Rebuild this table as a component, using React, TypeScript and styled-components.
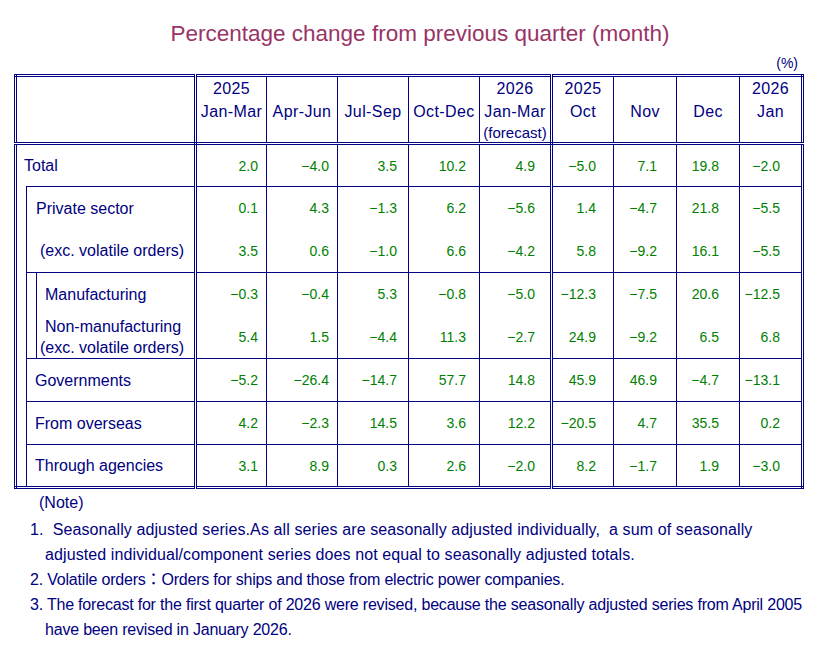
import React from "react";
import styled, { createGlobalStyle } from "styled-components";

const NAVY = "#000080";
const GREEN = "#008000";

const GlobalStyle = createGlobalStyle`
  html, body {
    margin: 0;
    padding: 0;
    background: #ffffff;
  }
  body {
    font-family: "Liberation Sans", Arial, "Noto Sans CJK JP", sans-serif;
    color: ${NAVY};
  }
`;

const Page = styled.div`
  width: 818px;
  height: 658px;
  overflow: hidden;
`;

const Title = styled.h1`
  margin: 0;
  padding: 20px 0 0 22px;
  font-size: 22.5px;
  line-height: 28px;
  font-weight: normal;
  text-align: center;
  color: #993366;
`;

const Unit = styled.div`
  margin-top: 6px;
  padding-right: 20px;
  text-align: right;
  font-size: 14px;
  line-height: 18px;
`;

const Table = styled.table`
  border-collapse: collapse;
  table-layout: fixed;
  width: 790px;
  margin: 2px auto 0;
  border: 3px double ${NAVY};
`;

const Col = styled.col<{ $w: number }>`
  width: ${(p) => p.$w}px;
`;

const Row = styled.tr<{ $h: number }>`
  height: ${(p) => p.$h}px;
`;

const HeadLabel = styled.th`
  padding: 0;
  border-right: 3px double ${NAVY};
  border-bottom: 3px double ${NAVY};
`;

const HeadCell = styled.th<{ $double?: boolean }>`
  padding: 0;
  vertical-align: middle;
  text-align: center;
  font-weight: normal;
  color: ${NAVY};
  border-bottom: 3px double ${NAVY};
  border-right: ${(p) => (p.$double ? `3px double ${NAVY}` : `1px solid ${NAVY}`)};
`;

const HeadLine = styled.div`
  white-space: nowrap;
  line-height: 23px;
  font-size: 16px;
  letter-spacing: 0.4px;

  &:last-child {
    line-height: 19px;
    font-size: 15px;
    letter-spacing: 0;
  }
`;

const Spacer = styled.td<{ $edge?: boolean }>`
  padding: 0;
  border-left: ${(p) => (p.$edge ? `1px solid ${NAVY}` : "none")};
  border-bottom: ${(p) => (p.$edge ? `1px solid ${NAVY}` : "none")};
`;

const LabelCell = styled.td<{ $pad: number; $top?: boolean; $left?: boolean; $open?: boolean }>`
  padding: 0 0 0 ${(p) => p.$pad}px;
  font-size: 16px;
  line-height: 21px;
  white-space: nowrap;
  color: ${NAVY};
  vertical-align: middle;
  border-right: 3px double ${NAVY};
  border-top: ${(p) => (p.$top ? `1px solid ${NAVY}` : "none")};
  border-left: ${(p) => (p.$left ? `1px solid ${NAVY}` : "none")};
  border-bottom: ${(p) => (p.$open ? "none" : `1px solid ${NAVY}`)};
`;

const WrapLabel = styled(LabelCell)`
  text-indent: 5px;
  white-space: normal;
`;

const NumCell = styled.td<{ $pad: number; $double?: boolean; $open?: boolean }>`
  padding: 0 ${(p) => p.$pad}px 0 0;
  text-align: right;
  vertical-align: middle;
  font-size: 14px;
  color: ${GREEN};
  white-space: nowrap;
  border-right: ${(p) => (p.$double ? `3px double ${NAVY}` : `1px solid ${NAVY}`)};
  border-bottom: ${(p) => (p.$open ? "none" : `1px solid ${NAVY}`)};
`;

const Notes = styled.div`
  padding-top: 1px;
  font-size: 16px;
  line-height: 25px;
  color: ${NAVY};
  white-space: nowrap;
`;

const NoteHead = styled.div`
  padding-left: 39px;
`;

const NoteList = styled.div`
  margin-top: 2px;
`;

const NoteItem = styled.div<{ $track: number }>`
  padding-left: 45px;
  text-indent: -15px;
  letter-spacing: ${(p) => p.$track}px;
`;

const columns = [
  { lines: ["2025", "Jan-Mar", ""], pad: 8 },
  { lines: ["", "Apr-Jun", ""], pad: 8 },
  { lines: ["", "Jul-Sep", ""], pad: 11 },
  { lines: ["", "Oct-Dec", ""], pad: 13 },
  { lines: ["2026", "Jan-Mar", "(forecast)"], pad: 15 },
  { lines: ["2025", "Oct", ""], pad: 17 },
  { lines: ["", "Nov", ""], pad: 19 },
  { lines: ["", "Dec", ""], pad: 20 },
  { lines: ["2026", "Jan", ""], pad: 21 },
];

const data = {
  total: ["2.0", "-4.0", "3.5", "10.2", "4.9", "-5.0", "7.1", "19.8", "-2.0"],
  priv: ["0.1", "4.3", "-1.3", "6.2", "-5.6", "1.4", "-4.7", "21.8", "-5.5"],
  privExc: ["3.5", "0.6", "-1.0", "6.6", "-4.2", "5.8", "-9.2", "16.1", "-5.5"],
  manuf: ["-0.3", "-0.4", "5.3", "-0.8", "-5.0", "-12.3", "-7.5", "20.6", "-12.5"],
  nonManuf: ["5.4", "1.5", "-4.4", "11.3", "-2.7", "24.9", "-9.2", "6.5", "6.8"],
  govt: ["-5.2", "-26.4", "-14.7", "57.7", "14.8", "45.9", "46.9", "-4.7", "-13.1"],
  overseas: ["4.2", "-2.3", "14.5", "3.6", "12.2", "-20.5", "4.7", "35.5", "0.2"],
  agencies: ["3.1", "8.9", "0.3", "2.6", "-2.0", "8.2", "-1.7", "1.9", "-3.0"],
};

function Numbers({ values, open }: { values: string[]; open?: boolean }) {
  return (
    <>
      {values.map((v, i) => (
        <NumCell key={i} $pad={columns[i].pad} $double={i === 4} $open={open}>
          {v.replace("-", "\u2212")}
        </NumCell>
      ))}
    </>
  );
}

export default function App() {
  return (
    <Page>
      <GlobalStyle />
      <Title>Percentage change from previous quarter (month)</Title>
      <Unit>(%)</Unit>
      <Table>
        <colgroup>
          {[11, 10, 159, 71, 71, 71, 71, 72, 62, 63, 63, 63].map((w, i) => (
            <Col key={i} $w={w} />
          ))}
        </colgroup>
        <tbody>
          <Row $h={68}>
            <HeadLabel colSpan={3} />
            {columns.map((c, i) => (
              <HeadCell key={i} $double={i === 4}>
                {c.lines.map((l, j) => (
                  <HeadLine key={j}>{l || "\u00a0"}</HeadLine>
                ))}
              </HeadCell>
            ))}
          </Row>
          <Row $h={43}>
            <LabelCell colSpan={3} $pad={7} $open>
              Total
            </LabelCell>
            <Numbers values={data.total} />
          </Row>
          <Row $h={43}>
            <Spacer rowSpan={7} />
            <LabelCell colSpan={2} $pad={9} $top $left $open>
              Private sector
            </LabelCell>
            <Numbers values={data.priv} open />
          </Row>
          <Row $h={43}>
            <LabelCell colSpan={2} $pad={13} $left>
              (exc. volatile orders)
            </LabelCell>
            <Numbers values={data.privExc} />
          </Row>
          <Row $h={43}>
            <Spacer rowSpan={2} $edge />
            <LabelCell $pad={8} $left $open>
              Manufacturing
            </LabelCell>
            <Numbers values={data.manuf} open />
          </Row>
          <Row $h={43}>
            <WrapLabel $pad={3} $left>
              Non-manufacturing
              <br />
              (exc. volatile orders)
            </WrapLabel>
            <Numbers values={data.nonManuf} />
          </Row>
          <Row $h={43}>
            <LabelCell colSpan={2} $pad={8} $left>
              Governments
            </LabelCell>
            <Numbers values={data.govt} />
          </Row>
          <Row $h={43}>
            <LabelCell colSpan={2} $pad={8} $left>
              From overseas
            </LabelCell>
            <Numbers values={data.overseas} />
          </Row>
          <Row $h={43}>
            <LabelCell colSpan={2} $pad={8} $left>
              Through agencies
            </LabelCell>
            <Numbers values={data.agencies} />
          </Row>
        </tbody>
      </Table>
      <Notes>
        <NoteHead>(Note)</NoteHead>
        <NoteList>
          <NoteItem $track={0.1}>
            1.&nbsp; Seasonally adjusted series.As all series are seasonally adjusted individually,&nbsp; a sum of seasonally
            <br />
            adjusted individual/component series does not equal to seasonally adjusted totals.
          </NoteItem>
          <NoteItem $track={-0.2}>2. Volatile orders：Orders for ships and those from electric power companies.</NoteItem>
          <NoteItem $track={-0.2}>
            3. The forecast for the first quarter of 2026 were revised, because the seasonally adjusted series from April 2005
            <br />
            have been revised in January 2026.
          </NoteItem>
        </NoteList>
      </Notes>
    </Page>
  );
}
